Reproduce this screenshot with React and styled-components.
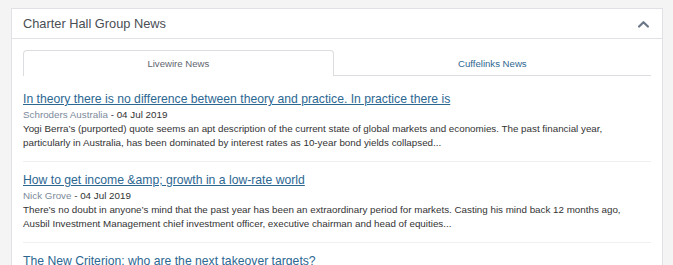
import React, { useState } from 'react';
import styled, { createGlobalStyle } from 'styled-components';

const GlobalStyle = createGlobalStyle`
    body {
        margin: 0;
        background-color: #f4f4f5;
        font-family: "Liberation Sans", Arial, sans-serif;
    }
`;

const articles = [
    {
        title: 'In theory there is no difference between theory and practice. In practice there is',
        author: 'Schroders Australia',
        date: '04 Jul 2019',
        text: 'Yogi Berra\u2019s (purported) quote seems an apt description of the current state of global markets and economies. The past financial year, particularly in Australia, has been dominated by interest rates as 10-year bond yields collapsed...'
    },
    {
        title: 'How to get income &amp; growth in a low-rate world',
        author: 'Nick Grove',
        date: '04 Jul 2019',
        text: 'There\u2019s no doubt in anyone\u2019s mind that the past year has been an extraordinary period for markets. Casting his mind back 12 months ago, Ausbil Investment Management chief investment officer, executive chairman and head of equities...'
    },
    {
        title: 'The New Criterion: who are the next takeover targets?',
        author: 'Livewire Markets',
        date: '03 Jul 2019',
        text: 'Takeover activity has picked up across the market over the past year...'
    }
];

export default function App() {
    const [tab, setTab] = useState('livewire');

    return (
        <Page>
            <GlobalStyle />
            <Panel>
                <Header>
                    <h2>Charter Hall Group News</h2>
                    <Chevron viewBox="0 0 12 8">
                        <path d="M1.2 6.8 L6 2 L10.8 6.8" />
                    </Chevron>
                </Header>
                <Body>
                    <Tabs>
                        <Tab active={tab === 'livewire'} onClick={() => setTab('livewire')}>Livewire News</Tab>
                        <Tab active={tab === 'cuffelinks'} onClick={() => setTab('cuffelinks')}>Cuffelinks News</Tab>
                    </Tabs>
                    <List>
                        {articles.map((a) => (
                            <Article key={a.title}>
                                <Title href="#">{a.title}</Title>
                                <Meta><span>{a.author}</span> - {a.date}</Meta>
                                <Summary>{a.text}</Summary>
                            </Article>
                        ))}
                    </List>
                </Body>
            </Panel>
        </Page>
    );
}

const Page = styled.div`
    padding: 8px 10px 0 11px;
    height: 265px;
    box-sizing: border-box;
    overflow: hidden;
`;

const Panel = styled.div`
    width: 652px;
    background-color: #fff;
    border: 1px solid #e0e1e5;
    box-sizing: border-box;
`;

const Header = styled.div`
    height: 29px;
    display: flex;
    align-items: center;
    justify-content: space-between;
    padding: 0 13px 0 11px;
    border-bottom: 1px solid #e0e1e5;

    h2 {
        margin: 0;
        font-size: 12.8px;
        font-weight: 400;
        color: #4a4e55;
    }
`;

const Chevron = styled.svg`
    width: 11px;
    height: 8px;
    fill: none;
    stroke: #6b7888;
    stroke-width: 2.4;
    stroke-linecap: round;
    stroke-linejoin: round;
`;

const Body = styled.div`
    padding: 11px 11px 0 11px;
`;

const Tabs = styled.div`
    display: flex;
    border-bottom: 1px solid #dcdde0;
`;

const Tab = styled.div`
    flex: 1 1 auto;
    display: flex;
    align-items: center;
    justify-content: center;
    font-size: 9.6px;
    cursor: pointer;
    box-sizing: border-box;
    border: 1px solid ${(p) => (p.active ? '#dcdde0' : 'transparent')};
    border-bottom: none;
    border-radius: 4px 4px 0 0;
    color: ${(p) => (p.active ? '#5f6670' : '#2f6790')};
    background-color: #fff;
    margin-bottom: ${(p) => (p.active ? '-1px' : '0')};
    height: ${(p) => (p.active ? '26px' : '25px')};
`;

const List = styled.div`
    margin-top: 5px;
`;

const Article = styled.div`
    padding: 10px 0 11px 0;
    border-bottom: 1px solid #efeff1;
`;

const Title = styled.a`
    display: block;
    font-size: 12.2px;
    line-height: 17px;
    color: #2c6792;
    text-decoration: underline;
`;

const Meta = styled.div`
    font-size: 9.8px;
    line-height: 14px;
    color: #333;

    span {
        color: #7d8a9a;
    }
`;

const Summary = styled.p`
    margin: 0;
    padding-right: 16px;
    font-size: 9.8px;
    line-height: 14px;
    color: #333;
`;
